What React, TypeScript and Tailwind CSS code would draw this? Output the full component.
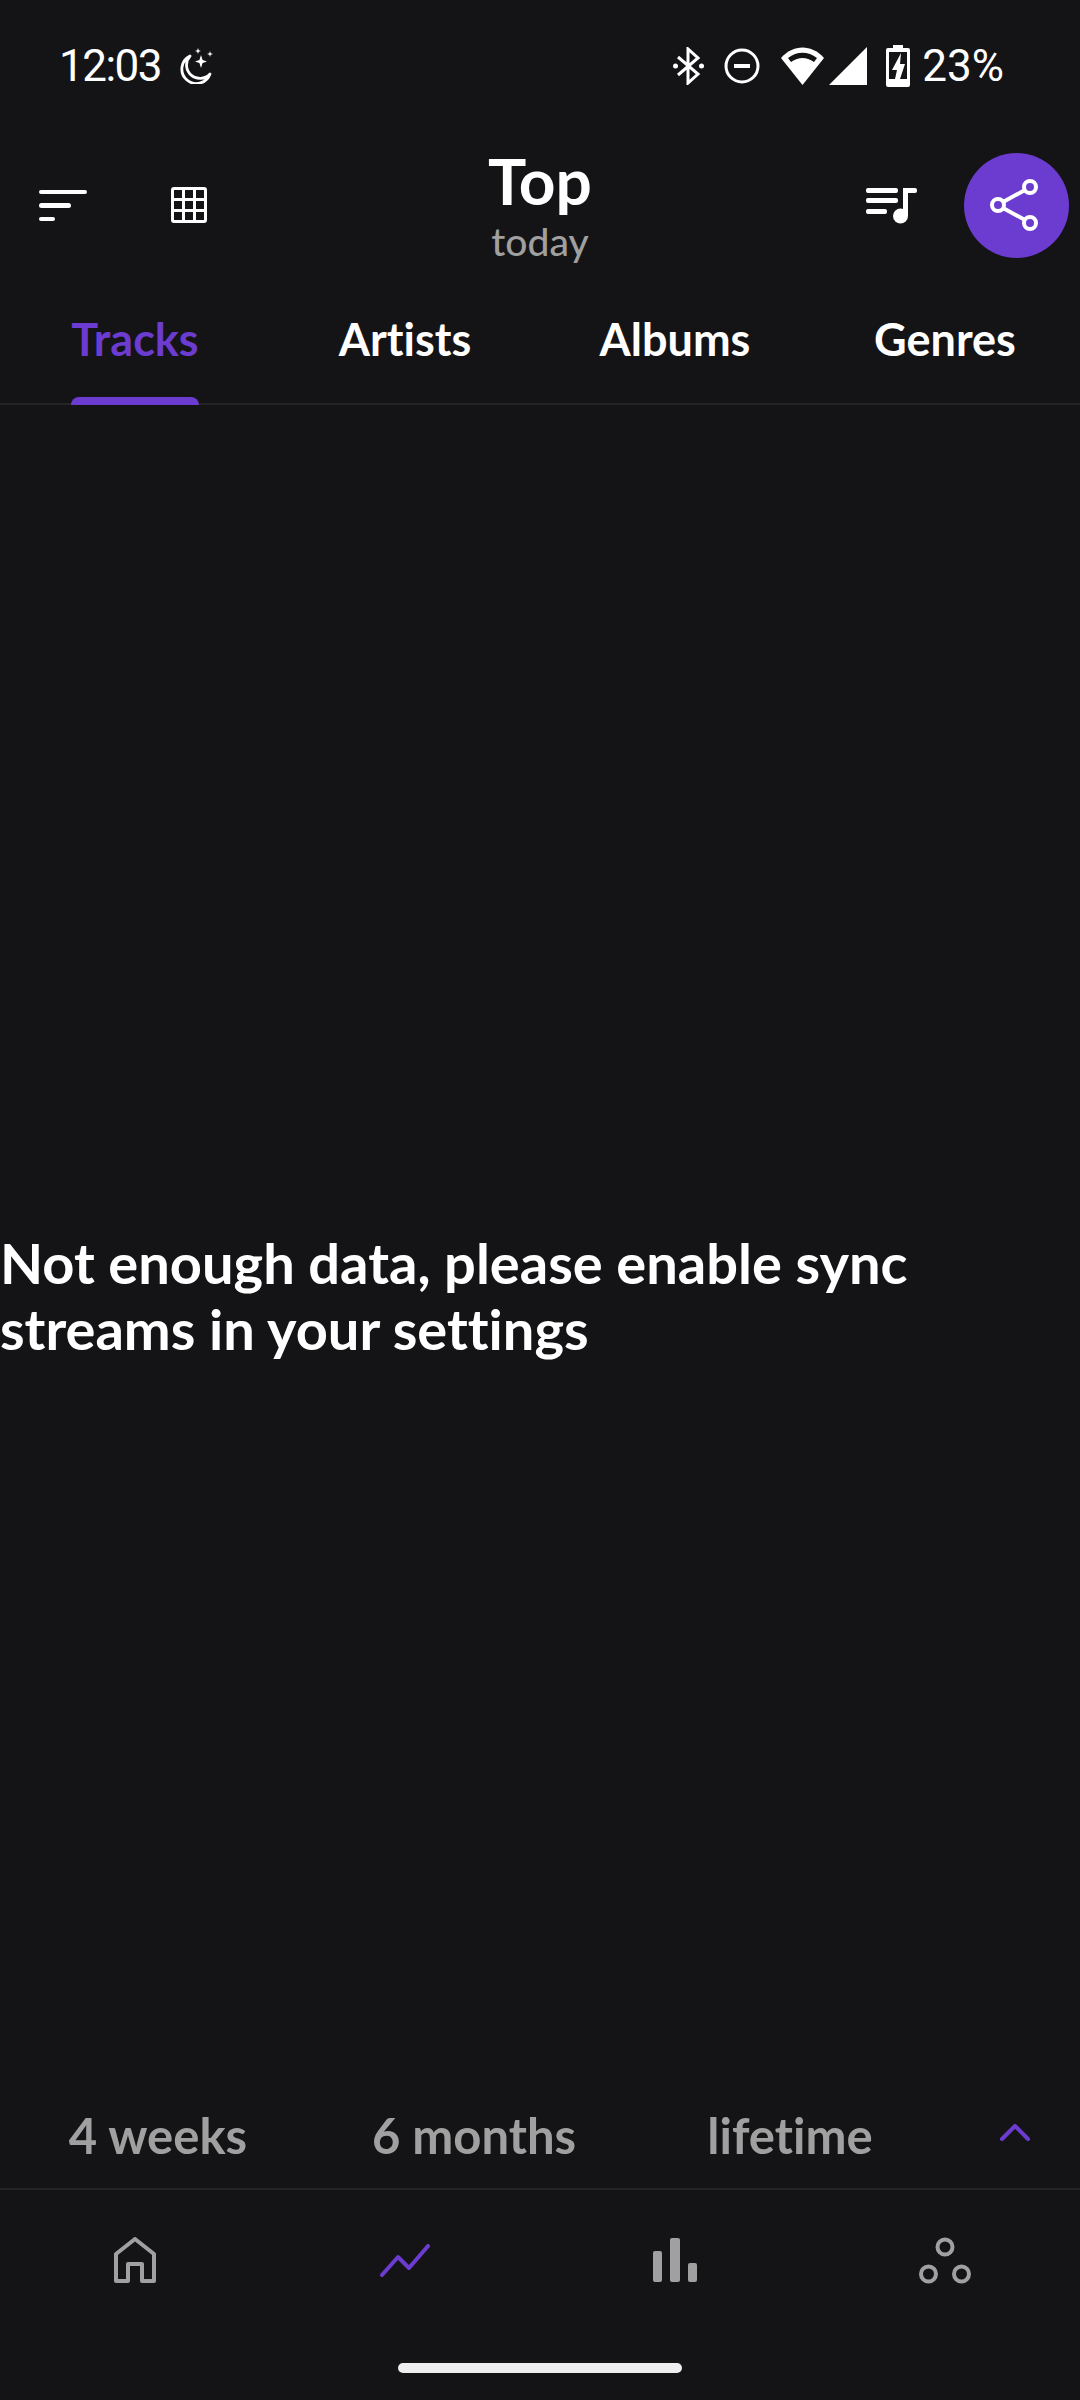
const sans = "font-['Lato',sans-serif] [font-variant-ligatures:none]";

function StatusBar() {
  return (
    <div className="h-[132px] flex items-center justify-between pl-[59px] pr-[76px] text-white font-['Roboto',sans-serif] text-[44px]">
      <div className="flex items-center gap-[16px]">
        <span className="tracking-[-1.5px]">12:03</span>
        <svg width="36" height="36" viewBox="0 0 36 36" fill="none">
          <path d="M13 8A14.500 14.500 0 1 0 33 26A13 13 0 0 1 13 8Z" stroke="white" strokeWidth="2.800" strokeLinejoin="round" />
          <path d="M24 7l1.600 5L30 13.500l-4.400 1.600L24 20l-1.600-4.900L18 13.500l4.400-1.500Z" fill="white" />
          <path d="M21 0l.8 2.200L24 3l-2.200.8L21 6l-.8-2.200L18 3l2.200-.8ZM33 3l.7 2.300L36 6l-2.300.7L33 9l-.7-2.300L30 6l2.300-.7Z" fill="white" />
        </svg>
      </div>
      <div className="flex items-center">
        <svg width="31" height="38" viewBox="0 0 31 38" fill="none" stroke="white" strokeWidth="3">
          <path d="M5 10L25 27L15 36V2L25 11L5 28" />
          <circle cx="2.500" cy="19" r="2.500" fill="white" stroke="none" />
          <circle cx="28.500" cy="19" r="2.500" fill="white" stroke="none" />
        </svg>
        <svg className="ml-[20px]" width="36" height="36" viewBox="0 0 36 36" fill="none" stroke="white" strokeWidth="3">
          <circle cx="18" cy="18" r="16" />
          <path d="M10 18H26" strokeWidth="4" />
        </svg>
        <svg className="ml-[20px]" width="45" height="40" viewBox="0 0 45 40">
          <path d="M22.500 39L1 12C13 -2 32 -2 44 12Z" fill="white" />
          <path d="M8 12C17 5 28 5 37 12L34 16C26 10.500 19 10.500 11 16Z" fill="#141416" />
        </svg>
        <svg className="ml-[4px]" width="38" height="38" viewBox="0 0 38 38">
          <path d="M38 0V38H0Z" fill="white" />
        </svg>
        <svg className="ml-[19px]" width="24" height="42" viewBox="0 0 24 42">
          <path d="M7 0H17V3H22A2 2 0 0 1 24 5V40A2 2 0 0 1 22 42H2A2 2 0 0 1 0 40V5A2 2 0 0 1 2 3H7Z" fill="white" />
          <path d="M3 7H21V34H14L19 19H14L15 8L6 25H11L9 34H3Z" fill="#141416" />
        </svg>
        <span className="ml-[12px]">23%</span>
      </div>
    </div>
  );
}

function Header() {
  return (
    <div className="h-[146px] grid grid-cols-[1fr_auto_1fr] items-center">
      <div className="flex items-center pl-[39px] gap-[84px]">
        <svg width="48" height="31" viewBox="0 0 48 31" fill="white">
          <rect x="0" y="0" width="48" height="4" rx="2" />
          <rect x="0" y="13" width="32" height="5" rx="2.500" />
          <rect x="0" y="27" width="16" height="4" rx="2" />
        </svg>
        <svg width="36" height="36" viewBox="0 0 36 36" fill="none" stroke="white" strokeWidth="3">
          <rect x="1.500" y="1.500" width="33" height="33" rx="1.500" />
          <path d="M12.500 2V34M23.500 2V34M2 12.500H34M2 23.500H34" />
        </svg>
      </div>
      <div className={`flex flex-col items-center gap-[7px] ${sans}`}>
        <span className="text-white text-[64px] font-bold leading-[64px]">Top</span>
        <span className="text-[#a0a0a0] text-[39px] font-medium leading-[42px]">today</span>
      </div>
      <div className="flex items-center justify-end pr-[11px] gap-[47px]">
        <svg width="51" height="38" viewBox="0 0 51 38" fill="white">
          <rect x="0" y="2" width="32" height="5" rx="2" />
          <rect x="0" y="12" width="32" height="5" rx="2" />
          <rect x="0" y="23" width="21" height="5" rx="2" />
          <path d="M37 2H49A2 2 0 0 1 51 4V5A2 2 0 0 1 49 7H42V30H37Z" />
          <circle cx="34.500" cy="30" r="7.500" />
        </svg>
        <button className="w-[105px] h-[105px] rounded-full bg-[#6c3bcf] flex items-center justify-center pr-[5px]">
          <svg width="48" height="54" viewBox="0 0 48 54" fill="none" stroke="white" strokeWidth="4">
            <path d="M13 24L35 12M13 30L35 42" />
            <circle cx="8" cy="27" r="6" />
            <circle cx="40" cy="9" r="6" />
            <circle cx="40" cy="45" r="6" />
          </svg>
        </button>
      </div>
    </div>
  );
}

function Tabs() {
  const tabs = ["Tracks", "Artists", "Albums", "Genres"];
  return (
    <div className={`h-[127px] grid grid-cols-4 border-b-[2px] border-[#242426] ${sans}`}>
      {tabs.map((t, i) => (
        <div key={t} className="flex justify-center">
          <div className="flex flex-col h-[127px]">
            <div className={`flex-1 flex items-center pt-[4px] text-[45px] font-bold ${i === 0 ? "text-[#6c3bcf]" : "text-white"}`}>
              {t}
            </div>
            <div className={`h-[8px] rounded-t-[8px] ${i === 0 ? "bg-[#6c3bcf]" : ""}`} />
          </div>
        </div>
      ))}
    </div>
  );
}

function Periods() {
  return (
    <div className={`h-[107px] flex items-center border-b-[2px] border-[#242426] ${sans}`}>
      {["4 weeks", "6 months", "lifetime"].map((p) => (
        <div key={p} className="w-[316px] text-center text-[#a0a0a0] text-[49px] font-bold">
          {p}
        </div>
      ))}
      <svg className="ml-[52px] mb-[6px]" width="30" height="17" viewBox="0 0 30 17" fill="none" stroke="#6c3bcf" strokeWidth="4" strokeLinecap="round" strokeLinejoin="round">
        <path d="M2 15L15 2L28 15" />
      </svg>
    </div>
  );
}

function BottomNav() {
  return (
    <div className="h-[140px] grid grid-cols-4 items-center justify-items-center">
      <svg width="42" height="46" viewBox="0 0 42 46" fill="none" stroke="#a0a0a0" strokeWidth="4" strokeLinejoin="round">
        <path d="M2 44V17L21 2L40 17V44H28V27H14V44Z" />
      </svg>
      <svg width="50" height="33" viewBox="0 0 50 33" fill="none" stroke="#6c3bcf" strokeWidth="4" strokeLinecap="round" strokeLinejoin="round">
        <path d="M2 31L18 13L29 24L48 2" />
      </svg>
      <svg width="44" height="44" viewBox="0 0 44 44" fill="#a0a0a0">
        <rect x="0" y="13" width="9" height="31" rx="2" />
        <rect x="17" y="0" width="10" height="44" rx="2" />
        <rect x="35" y="25" width="9" height="19" rx="2" />
      </svg>
      <svg width="52" height="47" viewBox="0 0 52 47" fill="none" stroke="#a0a0a0" strokeWidth="4">
        <circle cx="26" cy="10" r="7.500" />
        <circle cx="9.500" cy="37" r="7.500" />
        <circle cx="42.500" cy="37" r="7.500" />
      </svg>
    </div>
  );
}

export default function App() {
  return (
    <div className="w-[1080px] h-[2400px] bg-[#141416] flex flex-col overflow-hidden">
      <StatusBar />
      <Header />
      <Tabs />
      <div className={`flex-1 flex items-center pt-[104px] text-white text-[56px] font-bold leading-[66px] ${sans}`}>
        <div className="w-[960px]">Not enough data, please enable sync streams in your settings</div>
      </div>
      <Periods />
      <BottomNav />
      <div className="h-[70px] flex justify-center pt-[33px]">
        <div className="w-[284px] h-[10px] rounded-full bg-[#eeeeee]" />
      </div>
    </div>
  );
}
